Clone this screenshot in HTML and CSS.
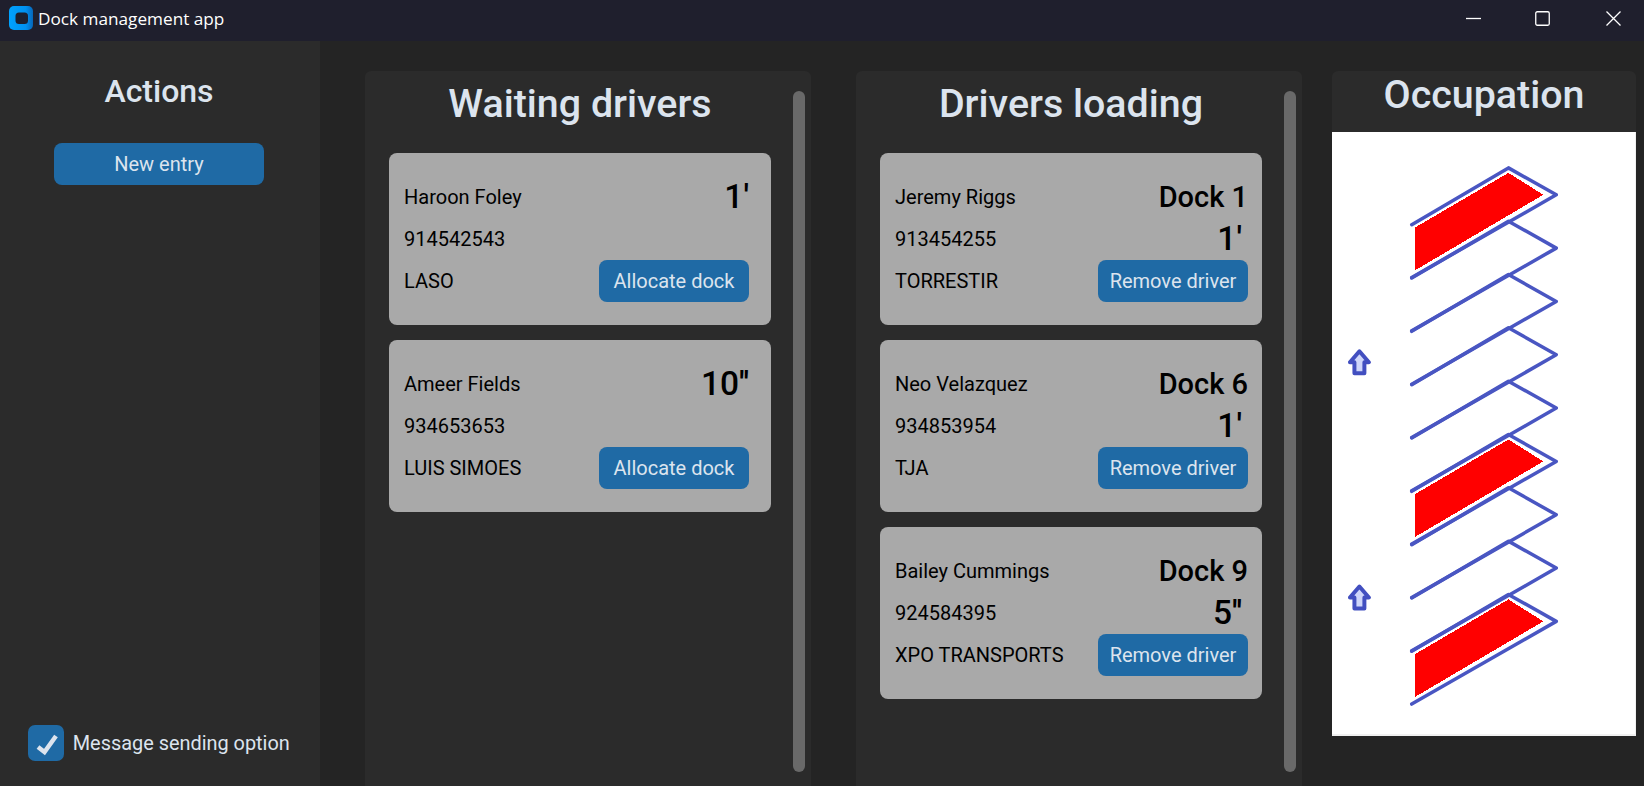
FILE: index.html
```html
<!DOCTYPE html>
<html lang="en">
<head>
    <meta charset="UTF-8">
    <meta name="viewport" content="width=device-width, initial-scale=1.0">
    <title>Dock management app</title>
    <link rel="stylesheet" href="styles.css">
</head>
<body>
    <header class="titlebar">
        <svg class="app-icon" viewBox="0 0 24 24">
            <defs>
                <linearGradient id="iconBlue" x1="0" y1="0" x2="1" y2="0">
                    <stop offset="0" stop-color="#00a2ff"/>
                    <stop offset="0.7" stop-color="#0090f0"/>
                    <stop offset="1" stop-color="#0766b8"/>
                </linearGradient>
            </defs>
            <rect width="24" height="24" rx="5" fill="url(#iconBlue)"/>
            <rect x="6.500" y="6.500" width="12.500" height="11.500" rx="3.500" fill="#1c2030"/>
        </svg>
        <span class="app-name">Dock management app</span>
        <div class="window-buttons">
            <svg class="win-btn" viewBox="0 0 15 15"><path d="M0 7.500H15"/></svg>
            <svg class="win-btn win-max" viewBox="0 0 15 15"><rect x="0.750" y="0.750" width="13.500" height="13.500" rx="1.500"/></svg>
            <svg class="win-btn" viewBox="0 0 15 15"><path d="M0.500 0.500L14.500 14.500M14.500 0.500L0.500 14.500"/></svg>
        </div>
    </header>

    <div class="content">
        <aside class="sidebar">
            <h2 class="sidebar-title">Actions</h2>
            <button class="btn btn-wide">New entry</button>
            <label class="message-option">
                <span class="checkbox">
                    <svg viewBox="0 0 36 36"><path d="M10 22L16.500 27L28 11"/></svg>
                </span>
                Message sending option
            </label>
        </aside>

        <main class="boards">
            <section class="panel">
                <h1 class="panel-title">Waiting drivers</h1>
                <div class="scrollbar"></div>
                <div class="card-list">
                    <div class="card">
                        <div class="card-info">
                            <span>Haroon Foley</span>
                            <span>914542543</span>
                            <span>LASO</span>
                        </div>
                        <div class="card-side">
                            <span class="time">1'</span>
                            <button class="btn btn-card">Allocate dock</button>
                        </div>
                    </div>
                    <div class="card">
                        <div class="card-info">
                            <span>Ameer Fields</span>
                            <span>934653653</span>
                            <span>LUIS SIMOES</span>
                        </div>
                        <div class="card-side">
                            <span class="time">10''</span>
                            <button class="btn btn-card">Allocate dock</button>
                        </div>
                    </div>
                </div>
            </section>

            <section class="panel">
                <h1 class="panel-title">Drivers loading</h1>
                <div class="scrollbar"></div>
                <div class="card-list">
                    <div class="card card-loading">
                        <div class="card-info">
                            <span>Jeremy Riggs</span>
                            <span>913454255</span>
                            <span>TORRESTIR</span>
                        </div>
                        <div class="card-side">
                            <span class="dock">Dock 1</span>
                            <span class="time">1'</span>
                            <button class="btn btn-card">Remove driver</button>
                        </div>
                    </div>
                    <div class="card card-loading">
                        <div class="card-info">
                            <span>Neo Velazquez</span>
                            <span>934853954</span>
                            <span>TJA</span>
                        </div>
                        <div class="card-side">
                            <span class="dock">Dock 6</span>
                            <span class="time">1'</span>
                            <button class="btn btn-card">Remove driver</button>
                        </div>
                    </div>
                    <div class="card card-loading">
                        <div class="card-info">
                            <span>Bailey Cummings</span>
                            <span>924584395</span>
                            <span>XPO TRANSPORTS</span>
                        </div>
                        <div class="card-side">
                            <span class="dock">Dock 9</span>
                            <span class="time">5''</span>
                            <button class="btn btn-card">Remove driver</button>
                        </div>
                    </div>
                </div>
            </section>

            <section class="occupation">
                <h1 class="occupation-title">Occupation</h1>
                <svg class="dock-map" viewBox="0 0 304 604">
                    <defs>
                        <filter id="soft"><feGaussianBlur stdDeviation="0.6"/></filter>
                        <path id="slot" d="M80 93L177 36L225 63L80 146"/>
                        <polygon id="taken" points="83,96 177,41 212,63 83,139"/>
                        <path id="arrow" d="M27.500 220L37 231H32.500V242H22.500V231H18Z"/>
                    </defs>
                    <g class="map-lines" filter="url(#soft)">
                        <use href="#slot"/>
                        <use href="#slot" y="53.500"/>
                        <use href="#slot" y="107"/>
                        <use href="#slot" y="160.500"/>
                        <use href="#slot" y="214"/>
                        <use href="#slot" y="267.500"/>
                        <use href="#slot" y="321"/>
                        <use href="#slot" y="374.500"/>
                        <use href="#slot" y="428"/>
                    </g>
                    <g class="map-arrows" filter="url(#soft)">
                        <use href="#arrow"/>
                        <use href="#arrow" y="236"/>
                    </g>
                    <g fill="#ff0000" shape-rendering="crispEdges">
                        <use href="#taken"/>
                        <use href="#taken" y="267.500"/>
                        <use href="#taken" y="428"/>
                    </g>
                </svg>
            </section>
        </main>
    </div>
</body>
</html>
```

FILE: styles.css
```css
* {
    box-sizing: border-box;
}
html, body {
    height: 100%;
}
body {
    margin: 0;
    display: flex;
    flex-direction: column;
    overflow: hidden;
    font-family: Roboto, "Liberation Sans", sans-serif;
    font-size: 20px;
    background-color: #242424;
    color: #dce4ee;
}
h1, h2 {
    margin: 0;
    text-align: center;
}

/* title bar */
.titlebar {
    display: flex;
    align-items: center;
    flex: none;
    height: 41px;
    padding-left: 9px;
    background-color: #1f1f2d;
    color: #fff;
}
.app-icon {
    width: 24px;
    height: 24px;
    margin-top: -5px;
}
.app-name {
    margin: -4px 0 0 5px;
    font-family: "Open Sans", sans-serif;
    font-size: 17.200px;
}
.window-buttons {
    display: flex;
    gap: 55px;
    margin-left: auto;
    padding: 0 23px 5px 0;
}
.win-btn {
    width: 15px;
    height: 15px;
    fill: none;
    stroke: #fff;
    stroke-width: 1.300;
}
.win-max {
    margin: 0 1px 0 -1px;
}

/* left column */
.content {
    display: flex;
    flex: 1;
    min-height: 0;
}
.sidebar {
    display: flex;
    flex-direction: column;
    align-items: center;
    flex: none;
    width: 320px;
    padding: 34px 2px 0 0;
    background-color: #2b2b2b;
}
.sidebar-title {
    font-size: 32px;
    font-weight: 500;
    line-height: 33px;
}
.btn {
    height: 42px;
    padding: 0;
    border: none;
    border-radius: 8px;
    background-color: #1f6aa5;
    color: #dce4ee;
    font-family: inherit;
    font-size: 20px;
}
.btn-wide {
    width: 210px;
    margin-top: 35px;
}
.message-option {
    display: flex;
    align-items: center;
    gap: 9px;
    margin: auto 0.500px 25px 0;
    font-size: 19.900px;
}
.checkbox {
    width: 36px;
    height: 36px;
    border-radius: 7px;
    background-color: #1f6aa5;
}
.checkbox svg {
    display: block;
    fill: none;
    stroke: #dce4ee;
    stroke-width: 4.500;
}

/* driver columns */
.boards {
    display: flex;
    flex: 1;
    padding: 30px 8px 0 45px;
}
.panel {
    position: relative;
    flex: none;
    width: 446px;
    margin-right: 45px;
    padding: 10px 0 0 24px;
    border-radius: 6px 6px 0 0;
    background-color: #2b2b2b;
}
.panel + .panel {
    margin-right: 30px;
}
.panel-title {
    width: 382px;
    font-size: 39.400px;
    font-weight: 500;
    line-height: 45px;
}
.scrollbar {
    position: absolute;
    top: 20px;
    right: 6px;
    width: 12px;
    height: 681px;
    border-radius: 6px;
    background-color: #696969;
}
.card-list {
    display: flex;
    flex-direction: column;
    gap: 15px;
    margin-top: 27px;
}
.card {
    display: flex;
    justify-content: space-between;
    width: 382px;
    height: 172px;
    padding: 23px 22px 23px 15px;
    border-radius: 8px;
    background-color: #a9a9a9;
    color: #000;
}
.card-loading {
    padding-right: 14px;
}
.card-info {
    display: flex;
    flex-direction: column;
    line-height: 42px;
}
.card-side {
    display: flex;
    flex-direction: column;
    align-items: flex-end;
}
.time {
    font-size: 33.500px;
    font-weight: 500;
    line-height: 42px;
}
.card-loading .time {
    margin-right: 6px;
}
.dock {
    font-size: 29px;
    font-weight: 500;
    line-height: 42px;
}
.btn-card {
    width: 150px;
    margin-top: auto;
}

/* occupation column */
.occupation {
    flex: none;
    width: 304px;
}
.occupation-title {
    height: 61px;
    padding-top: 1px;
    border-radius: 6px 6px 0 0;
    background-color: #2b2b2b;
    font-size: 39.400px;
    font-weight: 500;
    line-height: 45px;
}
.dock-map {
    display: block;
    width: 304px;
    height: 604px;
    background-color: #fff;
    border-right: 1px solid #f0f0f0;
    border-bottom: 2px solid #f0f0f0;
}
.map-lines {
    fill: none;
    stroke: #4a56c2;
    stroke-width: 3.500;
    stroke-linecap: round;
    stroke-linejoin: round;
}
.map-arrows {
    fill: #cfd6fa;
    stroke: #4350c0;
    stroke-width: 4;
    stroke-linejoin: round;
}
```
